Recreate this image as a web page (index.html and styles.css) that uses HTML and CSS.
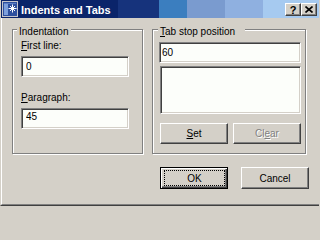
FILE: index.html
```html
<!DOCTYPE html>
<html>
<head>
<meta charset="utf-8">
<title>Indents and Tabs</title>
<link rel="stylesheet" href="styles.css">
</head>
<body>
<div class="window">
  <div class="titlebar">
    <svg class="title-icon" viewBox="0 0 16 16" width="16" height="16">
      <rect x="0.5" y="0.5" width="15" height="15" fill="#2d4f9e" stroke="#c4c4cc"/>
      <rect x="2" y="2" width="4" height="12" fill="#7d9fdc"/>
      <rect x="2" y="2" width="12" height="1" fill="#5a7cc4"/>
      <path d="M10.5 3.5v8M6.5 7.5h8M8 5l5 5M13 5l-5 5" stroke="#fff" stroke-width="1" fill="none"/>
    </svg>
    <span class="title-text">Indents and Tabs</span>
    <div class="caption-buttons">
      <button class="caption-btn caption-help">?</button>
      <button class="caption-btn caption-close">
        <svg viewBox="0 0 8 7" width="8" height="7"><path d="M0.5 0.5L7.5 6.5M7.5 0.5L0.5 6.5" stroke="#000" stroke-width="1.6" fill="none"/></svg>
      </button>
    </div>
  </div>
  <div class="client">
    <div class="groups">
      <div class="group group-indent">
        <div class="group-title">Indentation</div>
        <label class="field-label"><u>F</u>irst line:</label>
        <input class="edit edit-indent" type="text" value="0">
        <label class="field-label field-label-spaced"><u>P</u>aragraph:</label>
        <input class="edit edit-indent edit-high" type="text" value="45">
      </div>
      <div class="group group-tabs">
        <div class="group-title group-title-tabs"><u>T</u>ab stop position</div>
        <input class="edit edit-tab" type="text" value="60">
        <div class="listbox"></div>
        <div class="tab-buttons">
          <button class="btn"><span><u>S</u>et</span></button>
          <button class="btn btn-disabled" disabled><span>Cl<u>e</u>ar</span></button>
        </div>
      </div>
    </div>
    <div class="dialog-buttons">
      <button class="btn btn-dialog btn-default"><span class="focus-rect">OK</span></button>
      <button class="btn btn-dialog">Cancel</button>
    </div>
  </div>
</div>
</body>
</html>
```
FILE: styles.css
```css
html, body {
  margin: 0;
  padding: 0;
  background: #d4d0c8;
}

body {
  font-family: "Liberation Sans", Arial, sans-serif;
  font-size: 10px;
  color: #000;
}

.window {
  width: 319px;
  height: 206px;
  box-sizing: border-box;
  border-left: 1px solid #d4d0c8;
  border-bottom: 1px solid #404040;
  display: flex;
  flex-direction: column;
  overflow: hidden;
  background: #d4d0c8;
}

/* ---------- title bar ---------- */
.titlebar {
  flex: none;
  height: 18px;
  box-sizing: border-box;
  padding-top: 2px;
  display: flex;
  align-items: flex-start;
  color: #fff;
  background: linear-gradient(to right,
    #0a246a 0 117px,
    #16337c 117px 158px,
    #3b7ebf 158px 186px,
    #7a9bcf 186px 224px,
    #8fb0e0 224px 262px,
    #a6caf0 262px);
}

.title-icon {
  flex: none;
  margin: -1px 3px 0 1px;
}

.title-text {
  font-family: "Liberation Sans", Arial, sans-serif;
  font-weight: bold;
  font-size: 11px;
  line-height: 13px;
  margin-top: 2px;
  white-space: nowrap;
}

.caption-buttons {
  margin-left: auto;
  margin-right: 2px;
  margin-top: 1px;
  display: flex;
}

.caption-btn {
  width: 16px;
  height: 13px;
  box-sizing: border-box;
  padding: 0;
  margin: 0;
  border: 1px solid;
  border-color: #fff #404040 #404040 #fff;
  box-shadow: inset -1px -1px #808080;
  background: #d4d0c8;
  display: flex;
  align-items: center;
  justify-content: center;
  font-family: "Liberation Sans", Arial, sans-serif;
  font-weight: bold;
  font-size: 11px;
  line-height: 11px;
  color: #000;
}

.caption-help {
  padding-top: 1px;
}

/* ---------- client area ---------- */
.client {
  flex: 1;
  border-left: 1px solid #fff;
  border-bottom: 1px solid #808080;
  padding: 11px 0 0 10px;
  display: flex;
  flex-direction: column;
}

.groups {
  display: flex;
  gap: 9px;
}

.group {
  box-sizing: border-box;
  height: 125px;
  border: 1px solid #808080;
  box-shadow: inset 1px 1px #fff, 1px 1px #fff;
  display: flex;
  flex-direction: column;
  align-items: flex-start;
}

.group-indent {
  width: 131px;
  padding-left: 8px;
}

.group-tabs {
  width: 154px;
  padding-left: 6px;
}

.group-title {
  line-height: 13px;
  margin: -5px 0 0 -4px;
  padding: 0 2px;
  background: #d4d0c8;
  white-space: nowrap;
}

.group-title-tabs {
  margin-left: -1px;
  padding-right: 10px;
}

.field-label {
  display: block;
  line-height: 13px;
  margin-top: 1px;
}

.field-label-spaced {
  margin-top: 14px;
}

.edit {
  display: block;
  box-sizing: border-box;
  height: 21px;
  margin: 4px 0 0 0;
  border: 1px solid;
  border-color: #808080 #fff #fff #808080;
  box-shadow: inset 1px 1px #404040, inset -1px -1px #d4d0c8;
  background: #fcfefa;
  font-family: "Liberation Sans", Arial, sans-serif;
  font-size: 10px;
  color: #000;
  outline: none;
}

.edit-indent {
  width: 108px;
  padding: 0 0 0 4px;
}

.edit-high {
  padding-bottom: 5px;
}

.edit-tab {
  width: 142px;
  padding: 0 0 0 2px;
}

.listbox {
  box-sizing: border-box;
  width: 141px;
  height: 48px;
  margin: 3px 0 0 1px;
  border: 1px solid;
  border-color: #808080 #fff #fff #808080;
  box-shadow: inset 1px 1px #404040, inset -1px -1px #d4d0c8;
  background: #fcfefa;
}

.tab-buttons {
  display: flex;
  gap: 5px;
  margin: 9px 0 0 1px;
}

/* ---------- buttons ---------- */
.btn {
  box-sizing: border-box;
  width: 68px;
  height: 21px;
  padding: 0;
  margin: 0;
  border: 1px solid;
  border-color: #fff #404040 #404040 #fff;
  box-shadow: inset -1px -1px #808080;
  background: #d4d0c8;
  display: flex;
  align-items: center;
  justify-content: center;
  font-family: "Liberation Sans", Arial, sans-serif;
  font-size: 10px;
  color: #000;
}

.btn-disabled {
  color: #808080;
  text-shadow: 1px 1px 0 #fff;
}

.dialog-buttons {
  display: flex;
  justify-content: flex-end;
  gap: 13px;
  margin-top: 13px;
  padding-right: 10px;
}

.btn-dialog {
  height: 22px;
}

.btn-default {
  border-color: #000;
  box-shadow: inset 1px 1px #fff, inset -1px -1px #404040, inset -2px -2px #808080;
  align-items: stretch;
}

.focus-rect {
  flex: 1;
  margin: 2px 2px 2px 3px;
  border: 1px dotted #000;
  display: flex;
  align-items: center;
  justify-content: center;
}
```
